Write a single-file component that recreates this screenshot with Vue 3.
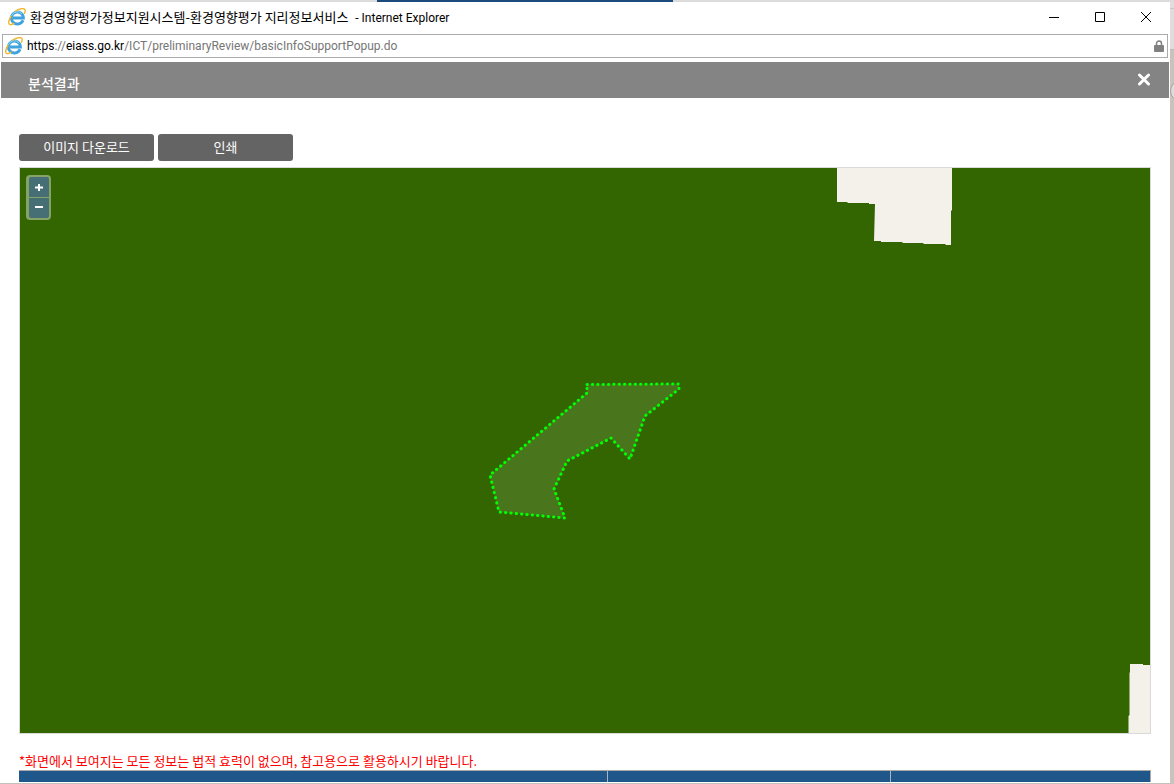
<script setup>
import { ref } from 'vue'

const address = ref('https://eiass.go.kr/ICT/preliminaryReview/basicInfoSupportPopup.do')
const site = 'M587 384.500 L679 384 L679 389 L645 416 L630 459 L611 438 L567 461 L554 489 L565 518 L499 512 L490 475 L587 393 Z'
</script>

<template>
  <div class="desktop">
    <div class="strip"><span class="strip-tab"></span></div>
    <div class="side"><span class="side-knob"></span></div>
    <div class="window">
      <header class="titlebar">
        <svg class="ie" viewBox="0 0 18 18" aria-hidden="true">
          <path d="M15 12.200A6 6 0 1 1 15.400 10H5" fill="none" stroke="#3fa4de" stroke-width="2.900" />
          <path d="M3.500 8A6 6 0 0 1 14 6" fill="none" stroke="#8fd6f5" stroke-width="1" />
          <path d="M7 3.500C11.500.3 16.200-.2 17 1.900c.4 1 0 2.500-.8 3.900M3.200 8C.5 12 .1 15.500 1.600 16.500c1.100.7 2.900 0 4.700-1.300" fill="none" stroke="#f2b933" stroke-width="1.500" />
        </svg>
        <h1 class="caption">환경영향평가정보지원시스템-환경영향평가 지리정보서비스 <span class="latin">- Internet Explorer</span></h1>
        <div class="controls">
          <button type="button" aria-label="최소화"><svg viewBox="0 0 12 12"><path d="M1 6.500H11" /></svg></button>
          <button type="button" aria-label="최대화"><svg viewBox="0 0 12 12"><path d="M1.500 1.500H10.500V10.500H1.500Z" /></svg></button>
          <button type="button" aria-label="닫기"><svg viewBox="0 0 12 12"><path d="M1 1L11 11M11 1L1 11" /></svg></button>
        </div>
      </header>

      <div class="address">
        <svg class="ie" viewBox="0 0 18 18" aria-hidden="true">
          <path d="M15 12.200A6 6 0 1 1 15.400 10H5" fill="none" stroke="#3fa4de" stroke-width="2.900" />
          <path d="M3.500 8A6 6 0 0 1 14 6" fill="none" stroke="#8fd6f5" stroke-width="1" />
          <path d="M7 3.500C11.500.3 16.200-.2 17 1.900c.4 1 0 2.500-.8 3.900M3.200 8C.5 12 .1 15.500 1.600 16.500c1.100.7 2.900 0 4.700-1.300" fill="none" stroke="#f2b933" stroke-width="1.500" />
        </svg>
        <a class="url" :href="address"><b>https</b>://<b>eiass.go.kr</b>/ICT/preliminaryReview/basicInfoSupportPopup.do</a>
        <svg class="lock" viewBox="0 0 10 12" aria-hidden="true">
          <path d="M2.500 6V3.500a2.500 2.500 0 0 1 5 0V6" fill="none" stroke="#808080" stroke-width="1.500" />
          <rect y="5" width="10" height="7" rx="1" fill="#808080" />
        </svg>
      </div>

      <div class="heading">
        <h2>분석결과</h2>
        <button type="button" class="close" aria-label="닫기">
          <svg viewBox="0 0 14 14"><path d="M2.500 2L11.500 11M11.500 2L2.500 11" /></svg>
        </button>
      </div>

      <main class="content">
        <div class="actions">
          <button type="button">이미지 다운로드</button>
          <button type="button">인쇄</button>
        </div>

        <div class="map">
          <svg class="canvas" viewBox="20 168 1130 565" preserveAspectRatio="xMidYMid slice" role="img" aria-label="지도">
            <rect x="20" y="168" width="1130" height="565" fill="#336600" />
            <path d="M837 168H952V210L951 211V245H946L945 244H924L923 243H903L902 242H881V241H874L875 204H869V203H848L847 202H837Z" fill="#f4f0ea" />
            <path d="M1130 664L1143 664L1143 665H1150V733H1128.500V716L1129.500 715V673L1130 672Z" fill="#f4f0ea" />
            <path :d="site" fill="#ffffff" fill-opacity=".11" stroke="#00ff00" stroke-width="3" stroke-linecap="round" stroke-linejoin="round" stroke-dasharray=".3 5.050" />
          </svg>
          <div class="zoom">
            <button type="button" aria-label="확대"><svg viewBox="0 0 20 20"><path d="M6 10.500H14M10 7V14" /></svg></button>
            <button type="button" aria-label="축소"><svg viewBox="0 0 20 20"><path d="M6 9H14" /></svg></button>
          </div>
        </div>

        <p class="notice">*화면에서 보여지는 모든 정보는 법적 효력이 없으며, 참고용으로 활용하시기 바랍니다.</p>
        <table class="results" aria-label="분석결과">
          <colgroup><col class="wide"><col class="mid"><col></colgroup>
          <tbody><tr><td></td><td></td><td></td></tr></tbody>
        </table>
      </main>
    </div>
  </div>
</template>

<style>
body { margin: 0; }
</style>

<style scoped>
* { box-sizing: border-box; }
button { margin: 0; padding: 0; border: 0; background: none; font: inherit; color: inherit; }
button svg { display: block; }
h1, h2, p { margin: 0; }

.desktop {
  position: relative;
  display: flex;
  min-height: 100vh;
  padding: 2px 4px 1px 0;
  background: #c4c1bc;
  font-family: "Noto Sans CJK KR", sans-serif;
  font-size: 13px;
}
.strip {
  position: absolute;
  inset: 0 0 auto;
  height: 2px;
  background: #dcdcdc;
}
.strip-tab {
  position: absolute;
  left: 377px;
  width: 296px;
  height: 2px;
  background: #1c4a7d;
}
.side {
  position: absolute;
  inset: 2px 0 0 auto;
  width: 4px;
  overflow: hidden;
  background: linear-gradient(#dedede 0 6px, #c8c8c8 6px 7px, #dddddd 7px 47px, #bababa 47px 48px, #c9c4bb 48px);
}
.side-knob {
  position: absolute;
  top: 78px;
  left: 0;
  width: 22px;
  height: 22px;
  border: 1px solid #a5a29d;
  border-radius: 50%;
  background: #dddddd;
}
.window {
  position: relative;
  flex: 1;
  display: flex;
  flex-direction: column;
  min-width: 0;
  background: #fff;
}
.titlebar {
  display: flex;
  align-items: center;
  height: 32px;
  padding: 0 1px 2px 8px;
}
.ie { flex: none; width: 18px; height: 18px; }
.caption {
  flex: 1;
  margin-left: 4px;
  font-size: 13px;
  font-weight: 400;
  line-height: 20px;
  white-space: nowrap;
  color: #000;
}
.latin { margin-left: 4px; font-family: Roboto, sans-serif; font-size: 12px; }
.controls { display: flex; }
.controls button {
  display: flex;
  align-items: center;
  justify-content: center;
  width: 46px;
  height: 30px;
}
.controls svg {
  width: 12px;
  height: 12px;
  fill: none;
  stroke: #000;
  stroke-width: 1;
}
.address {
  display: flex;
  align-items: center;
  height: 24px;
  margin: 0 2px 4px;
  padding: 0 3px 0 2px;
  border: 1px solid #ababab;
}
.url {
  flex: 1;
  margin-left: 4px;
  font-family: Roboto, sans-serif;
  font-size: 12px;
  line-height: 20px;
  color: #767676;
  text-decoration: none;
}
.url b { font-weight: 400; color: #000; }
.lock { width: 10px; height: 12px; }
.heading {
  display: flex;
  align-items: center;
  justify-content: space-between;
  height: 36px;
  margin: 0 1px;
  padding: 0 18px 0 27px;
  background: #848484;
  color: #fff;
}
.heading h2 { padding-top: 5px; font-size: 14px; font-weight: 500; line-height: 20px; }
.close svg {
  width: 14px;
  height: 14px;
  fill: none;
  stroke: #fff;
  stroke-width: 3;
  stroke-linecap: round;
}
.content {
  flex: 1;
  display: flex;
  flex-direction: column;
  padding: 36px 19px 1px;
}
.actions { display: flex; gap: 4px; margin-bottom: 6px; }
.actions button {
  width: 135px;
  height: 27px;
  padding-bottom: 2px;
  border-radius: 3px;
  background: #646464;
  color: #fff;
  line-height: 24px;
}
.map {
  position: relative;
  flex: 1;
  min-height: 300px;
  border: 1px solid #d9d9d9;
}
.canvas {
  position: absolute;
  width: 100%;
  height: 100%;
}
.zoom {
  position: absolute;
  top: 7px;
  left: 6px;
  display: flex;
  flex-direction: column;
  gap: 1px;
  padding: 2px 2px 2px 3px;
  border-radius: 4px;
  background: #85a366;
}
.zoom button {
  width: 20px;
  height: 20px;
  background: #456f74;
}
.zoom button:first-child { border-radius: 2px 2px 0 0; }
.zoom button:last-child { border-radius: 0 0 2px 2px; }
.zoom svg {
  width: 20px;
  height: 20px;
  fill: none;
  stroke: #fff;
  stroke-width: 2;
}
.notice {
  margin-top: 17px;
  line-height: 19px;
  white-space: nowrap;
  color: #f00;
}
.results {
  width: 100%;
  table-layout: fixed;
  border-spacing: 0;
  border-top: 1px solid #a8a8a8;
  border-right: 1px solid #a8a8a8;
  background: #20578b;
}
.results .wide { width: 52%; }
.results .mid { width: 25%; }
.results td { height: 11px; padding: 0; }
.results td + td { border-left: 1px solid #a8b4c0; }
</style>
